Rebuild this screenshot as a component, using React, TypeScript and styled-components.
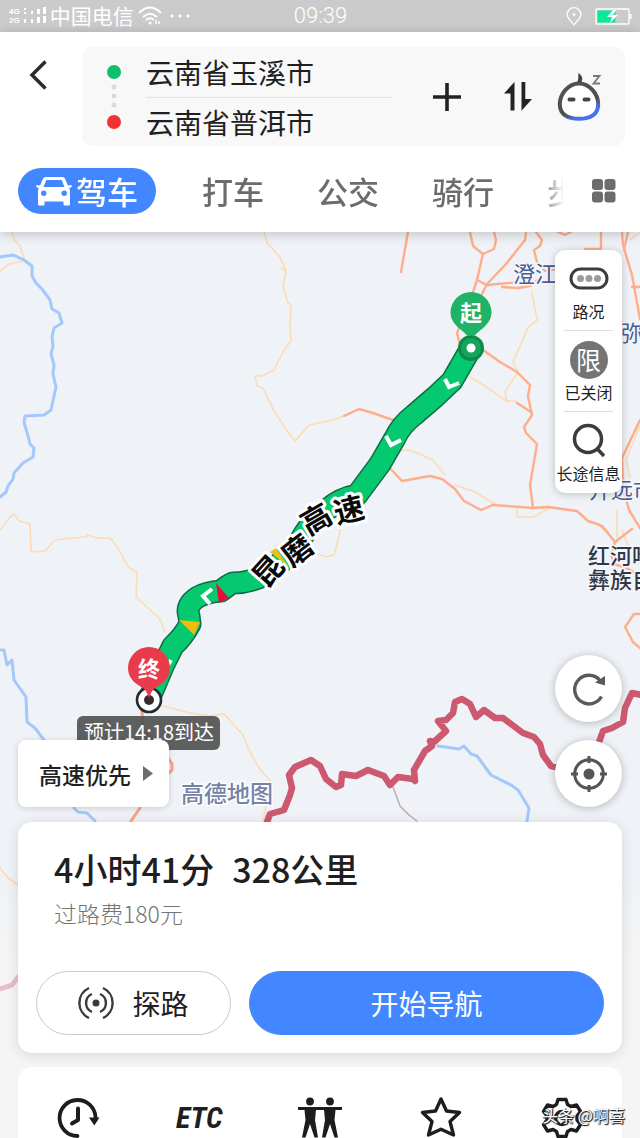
import React from 'react';
import styled, { createGlobalStyle } from 'styled-components';

const GlobalStyle = createGlobalStyle`
  * { box-sizing: border-box; }
  html, body { margin: 0; padding: 0; }
  body {
    background: #f5f5f5;
    color: #1f1f1f;
    font-family: "Noto Sans CJK SC", "Noto Sans", sans-serif;
  }
  button, input {
    margin: 0;
    padding: 0;
    border: 0;
    background: none;
    color: inherit;
    font: inherit;
  }
  button { cursor: pointer; }
  svg { display: block; flex: none; }
`;

const Screen = styled.div`
  height: 100vh;
  display: flex;
  flex-direction: column;
  overflow: hidden;
`;

/* ---------- status bar ---------- */

const StatusBar = styled.div`
  flex: none;
  height: 32px;
  padding: 0 8px 0 9px;
  display: grid;
  grid-template-columns: 1fr auto 1fr;
  align-items: center;
  background: #cbcbcb;
  color: #fff;
  font-size: 21px;
  line-height: 30px;
  font-weight: 300;
`;

const StatusGroup = styled.div<{ $end?: boolean; $gap: number }>`
  display: flex;
  align-items: center;
  justify-content: ${(p) => (p.$end ? 'flex-end' : 'flex-start')};
  gap: ${(p) => p.$gap}px;
`;

const NetworkType = styled.div`
  display: flex;
  flex-direction: column;
  font: 700 8px/9px "Liberation Sans", sans-serif;
`;

const CarrierName = styled.span`
  padding-bottom: 2px;
  font-weight: 400;
`;

const Clock = styled.time`
  font-family: Roboto, sans-serif;
  font-size: 22px;
`;

/* ---------- header ---------- */

const Header = styled.header`
  flex: none;
  position: relative;
  z-index: 1;
  padding: 15px 15px 18px 18px;
  background: #fff;
  box-shadow: 0 2px 12px rgba(0, 0, 0, 0.2);
`;

const RouteRow = styled.div`
  display: flex;
  align-items: flex-start;
  margin-bottom: 22px;
`;

const BackButton = styled.button`
  width: 64px;
  height: 56px;
  padding-left: 11px;
  display: flex;
  align-items: center;
`;

const RouteBox = styled.form`
  flex: 1;
  min-width: 0;
  height: 99px;
  padding: 0 22px 0 25px;
  display: flex;
  align-items: center;
  background: #f8f8f8;
  border-radius: 10px;
`;

const Fields = styled.div`
  flex: 1;
  min-width: 0;
  margin: 0 42px 0 25px;
`;

const Field = styled.input`
  display: block;
  width: 100%;
  height: 49px;
  outline: 0;
  font-size: 28px;
  line-height: 48px;
  & + & { border-top: 1px solid #e2e2e2; }
`;

const BoxActions = styled.div`
  display: flex;
  align-items: center;
`;

const IconButton = styled.button<{ $before?: number }>`
  display: block;
  margin-left: ${(p) => p.$before ?? 0}px;
`;

const TabRow = styled.div`
  display: flex;
  align-items: center;
  padding-right: 9px;
  gap: 28px;
`;

const Tabs = styled.nav`
  flex: 1;
  min-width: 0;
  display: flex;
  overflow: hidden;
  mask-image: linear-gradient(to right, #000 calc(100% - 24px), transparent);
`;

const Tab = styled.button<{ $active?: boolean }>`
  flex: none;
  height: 46px;
  padding: ${(p) => (p.$active ? '0 18px' : '0 27px 0 26px')};
  margin-right: ${(p) => (p.$active ? 20 : 0)}px;
  display: flex;
  align-items: center;
  gap: 4px;
  border-radius: 23px;
  background: ${(p) => (p.$active ? '#4287ff' : 'transparent')};
  color: ${(p) => (p.$active ? '#fff' : '#6c6c6c')};
  font-size: 31px;
  line-height: 46px;
  font-weight: 500;
`;

/* ---------- map ---------- */

const Body = styled.main`
  flex: 1;
  min-height: 0;
  position: relative;
  display: flex;
  flex-direction: column;
  background: linear-gradient(#eff2f6 640px, #f5f5f5 720px);
`;

const MapCanvas = styled.svg`
  position: absolute;
  top: 0;
  left: 0;
  width: 100%;
  height: auto;
`;

const Stage = styled.section`
  flex: 1;
  min-height: 0;
  position: relative;
  padding: 18px 18px 15px;
  display: flex;
  justify-content: space-between;
  align-items: flex-end;
`;

const Preference = styled.button`
  height: 67px;
  padding: 0 16px 0 21px;
  display: flex;
  align-items: center;
  gap: 11px;
  background: #fff;
  border-radius: 8px;
  box-shadow: 0 1px 6px rgba(0, 0, 0, 0.16);
  font-size: 23px;
  font-weight: 500;
`;

const Controls = styled.div`
  align-self: stretch;
  width: 67px;
  display: flex;
  flex-direction: column;
  gap: 18px;
`;

const LayerCard = styled.div`
  margin-bottom: auto;
  background: #fff;
  border-radius: 10px;
  box-shadow: 0 1px 8px rgba(0, 0, 0, 0.22);
`;

const LayerButton = styled.button`
  position: relative;
  width: 100%;
  height: 81px;
  padding: 10px 0;
  display: flex;
  flex-direction: column;
  align-items: center;
  gap: 3px;
  font-size: 16px;
  line-height: 20px;
  white-space: nowrap;
  &:not(:last-child)::after {
    content: "";
    position: absolute;
    left: 9px;
    right: 9px;
    bottom: 0;
    height: 1px;
    background: #dedede;
  }
`;

const LimitBadge = styled.span`
  width: 38px;
  height: 38px;
  border-radius: 50%;
  background: #747474;
  color: #fff;
  font-size: 25px;
  line-height: 36px;
`;

const RoundButton = styled.button`
  width: 67px;
  height: 67px;
  display: flex;
  align-items: center;
  justify-content: center;
  background: #fff;
  border-radius: 50%;
  box-shadow: 0 1px 8px rgba(0, 0, 0, 0.26);
`;

/* ---------- bottom panels ---------- */

const Summary = styled.section`
  flex: none;
  position: relative;
  margin: 0 18px 14px;
  padding: 27px 18px 18px;
  background: #fff;
  border-radius: 14px;
  box-shadow: 0 2px 14px rgba(0, 0, 0, 0.12);
`;

const Totals = styled.h1`
  margin: 0 18px 9px;
  display: flex;
  gap: 18px;
  font-size: 34px;
  line-height: 40px;
  font-weight: 500;
`;

const Toll = styled.p`
  margin: 0 18px 43px;
  color: #757575;
  font-size: 23px;
  line-height: 30px;
  font-weight: 300;
`;

const Actions = styled.div`
  display: flex;
  gap: 18px;
`;

const ActionButton = styled.button<{ $primary?: boolean }>`
  flex: ${(p) => (p.$primary ? '1 1 0' : '0 0 195px')};
  height: 64px;
  display: flex;
  align-items: center;
  justify-content: center;
  gap: 18px;
  border: 1px solid ${(p) => (p.$primary ? '#4287ff' : '#cacaca')};
  border-radius: 32px;
  background: ${(p) => (p.$primary ? '#4287ff' : '#fff')};
  color: ${(p) => (p.$primary ? '#fff' : '#1f1f1f')};
  font-size: 28px;
`;

const Toolbar = styled.nav`
  flex: none;
  position: relative;
  height: 71px;
  margin: 0 18px;
  padding-top: 29px;
  display: grid;
  grid-template-columns: repeat(5, 1fr);
  overflow: hidden;
  background: #fff;
  border-radius: 14px 14px 0 0;
`;

const ToolButton = styled.button`
  height: 44px;
  display: flex;
  align-items: center;
  justify-content: center;
`;

const EtcMark = styled.span`
  font: italic 700 30px/44px "Roboto Condensed", "Liberation Sans Narrow", "DejaVu Sans Condensed", sans-serif;
`;

const Watermark = styled.div`
  position: absolute;
  right: 15px;
  bottom: 11px;
  color: #fff;
  font-size: 16px;
  line-height: 24px;
  text-shadow: 1px 1px 1px #222, 0 1px 1px #444, 1px 0 1px #555;
`;

/* ---------- drawings ---------- */

const SignalBars = () => (
  <svg width="22" height="18" viewBox="0 0 22 18" fill="#fff">
    <path d="M0 1h2v2H0zM0 5h2v2H0zM0 12h2v4H0zM7 4h2v3H7zM7 12h2v4H7zM13 2h3v5h-3zM13 10h3v6h-3zM19 0h3v7h-3zM19 9h3v7h-3z" />
  </svg>
);

const WifiGlyph = () => (
  <svg width="24" height="20" viewBox="0 0 24 20" fill="none" stroke="#fff" strokeWidth="2">
    <path d="M1 7Q12-4 23 7M5 11q7-6.500 14 0M8 14q4-3.500 8 0" />
    <circle cx="12" cy="17" r="1.500" fill="#fff" stroke="none" />
    <path d="M18 14v4M21 15v3" strokeWidth="1.500" />
  </svg>
);

const MoreDots = () => (
  <svg width="26" height="4" viewBox="0 0 26 4" fill="#fff">
    <circle cx="6" cy="2" r="1.600" /><circle cx="14" cy="2" r="1.600" /><circle cx="22" cy="2" r="1.600" />
  </svg>
);

const PinGlyph = () => (
  <svg width="16" height="19" viewBox="0 0 16 19" fill="none" stroke="#fff" strokeWidth="1.300">
    <path d="M8 17.800C5.500 14.500 1.200 11.400 1.200 7.500a6.800 6.800 0 0 1 13.600 0c0 3.900-4.300 7-6.800 10.300z" />
    <circle cx="8" cy="7.500" r="1.700" fill="#fff" stroke="none" opacity="0.700" />
  </svg>
);

const Battery = () => (
  <svg width="37" height="17" viewBox="0 0 37 17">
    <rect x="1" y="1" width="33" height="15" rx="1" fill="none" stroke="#fff" strokeWidth="1.300" />
    <path d="M34.500 6h2v5h-2z" fill="#fff" />
    <path d="M2.500 2.500h18v12h-18z" fill="#06ec96" />
    <path d="M18 2l-6 7h5l-2 6 8-8h-5l3-5z" fill="#fff" />
  </svg>
);

const BackChevron = () => (
  <svg width="18" height="30" viewBox="0 0 18 30" fill="none" stroke="#2c2c2c" strokeWidth="3.500">
    <path d="M16.500 1.500L3 15l13.500 13.500" />
  </svg>
);

const RouteDots = () => (
  <svg width="14" height="66" viewBox="0 0 14 66">
    <circle cx="7" cy="8" r="7" fill="#0fc06b" />
    <g fill="#dadada"><circle cx="7" cy="23" r="2.500" /><circle cx="7" cy="32" r="2.500" /><circle cx="7" cy="41" r="2.500" /></g>
    <circle cx="7" cy="58" r="7" fill="#f23232" />
  </svg>
);

const PlusGlyph = () => (
  <svg width="28" height="28" viewBox="0 0 28 28" stroke="#222" strokeWidth="3.600">
    <path d="M14 0v28M0 14h28" />
  </svg>
);

const SwapGlyph = () => (
  <svg width="28" height="29" viewBox="0 0 28 29" fill="#222">
    <path d="M10.500 0v28.500H6.500V11.500H0z" />
    <path d="M17.500 0h3.800v17H28L17.500 28.800z" />
  </svg>
);

const Assistant = () => (
  <svg width="46" height="48" viewBox="0 0 46 48">
    <defs>
      <linearGradient id="face" x1="0.350" y1="0.450" x2="0.650" y2="1">
        <stop offset="0.450" stopColor="#505050" />
        <stop offset="0.800" stopColor="#4a70f0" />
      </linearGradient>
    </defs>
    <path d="M22 10.500c10.500 0 19 10 19.200 20.500 .1 10.500-8 14.800-19.200 14.800S2.700 41.500 2.800 31C3 20.500 11.500 10.500 22 10.500z" fill="#fff" stroke="url(#face)" strokeWidth="4" />
    <path d="M20 9c2-3 1-5 1.500-9 3 2 5 5 3 9z" fill="#444" />
    <path d="M12.500 26.500h4M27.500 26.500h4" stroke="#444" strokeWidth="4" strokeLinecap="round" />
    <path d="M36 3h6.500l-6 7.500H43" fill="none" stroke="#777" strokeWidth="1.800" />
  </svg>
);

const CarGlyph = () => (
  <svg width="36" height="30" viewBox="0 0 36 30">
    <path fill="#fff" fillRule="evenodd" d="M9.500 1h17c1.300 0 2 .7 2.500 1.800L32 9.500l3-.5c1 0 1 2 0 2.500l-2 .5c.8 1 1 2 1 3.500V28c0 1-.5 1.500-1.500 1.500H29c-1 0-1.500-.5-1.500-1.500v-2.500h-19V28c0 1-.5 1.500-1.500 1.500H3.500C2.500 29.500 2 29 2 28V15.500C2 14 2.200 13 3 12l-2-.5C0 11 0 9 1 9l3 .5 3-6.700C7.500 1.700 8.200 1 9.500 1zm.9 3L7.500 11h21l-2.900-7zM7.800 14.500a2.700 2.700 0 1 0 0 5.400 2.700 2.700 0 0 0 0-5.400zm20.400 0a2.700 2.700 0 1 0 0 5.400 2.700 2.700 0 0 0 0-5.400z" />
  </svg>
);

const GridGlyph = () => (
  <svg width="24" height="24" viewBox="0 0 24 24" fill="#6c6c6c">
    <rect width="11" height="11" rx="3" /><rect x="12.500" width="11" height="11" rx="3" />
    <rect y="12.500" width="11" height="11" rx="3" /><rect x="12.500" y="12.500" width="11" height="11" rx="3" />
  </svg>
);

const TrafficGlyph = () => (
  <svg width="40" height="38" viewBox="0 0 40 38">
    <rect x="2" y="9" width="36" height="19" rx="9.500" fill="none" stroke="#3c3c3c" strokeWidth="3" />
    <g fill="#9b9b9b"><circle cx="11.500" cy="18.500" r="3.500" /><circle cx="20" cy="18.500" r="3.500" /><circle cx="28.500" cy="18.500" r="3.500" /></g>
  </svg>
);

const SearchGlyph = () => (
  <svg width="38" height="38" viewBox="0 0 38 38" fill="none" stroke="#3c3c3c" strokeWidth="3.500">
    <circle cx="18" cy="17" r="13.500" />
    <path d="M26.500 26l7.500 8" />
  </svg>
);

const RefreshGlyph = () => (
  <svg width="36" height="36" viewBox="0 0 36 36">
    <path d="M30.500 25.500A14.300 14.300 0 1 1 29 9.500" fill="none" stroke="#5a5a5a" strokeWidth="3.400" />
    <path d="M34 5v9.500l-10-3z" fill="#5a5a5a" />
  </svg>
);

const LocateGlyph = () => (
  <svg width="38" height="38" viewBox="0 0 38 38" fill="none" stroke="#555">
    <circle cx="19" cy="19" r="14.300" strokeWidth="3" />
    <circle cx="19" cy="19" r="5.500" fill="#555" stroke="none" />
    <path d="M19 1v7M19 30v7M1 19h7M30 19h7" strokeWidth="3" />
  </svg>
);

const ProbeGlyph = () => (
  <svg width="36" height="34" viewBox="0 0 36 34" fill="none" stroke="#3a3a3a" strokeWidth="2.400">
    <circle cx="18" cy="17" r="3.500" fill="#3a3a3a" stroke="none" />
    <path d="M14 8a9.800 9.800 0 0 0 0 18M22 8a9.800 9.800 0 0 1 0 18M11 2a16.500 16.500 0 0 0 0 30M25 2a16.500 16.500 0 0 1 0 30" />
  </svg>
);

const HistoryGlyph = () => (
  <svg width="44" height="42" viewBox="0 0 44 42" fill="none" stroke="#1d1d1d">
    <path d="M21.500 39A18 18 0 1 1 39.500 20v3" strokeWidth="3.800" strokeLinecap="round" />
    <path d="M33 20.500h10.500l-5.200 8z" fill="#1d1d1d" stroke="none" />
    <path d="M22 11.500v11.500l-6 3.500" strokeWidth="4" strokeLinecap="round" strokeLinejoin="round" />
  </svg>
);

const PeopleGlyph = () => (
  <svg width="44" height="44" viewBox="0 0 44 44" fill="#1d1d1d">
    <circle cx="12" cy="5.500" r="3.900" /><circle cx="32" cy="5.500" r="3.900" />
    <path d="M0 11h44v3h-6.500L36.500 24l3.500 17.500h-3.500L32 28l-4.500 13.500H24L27 24l-1-10h-8L17 24l3 17.500h-3.500L12 28 7.500 41.500H4L7.500 24 6.500 14H0z" />
  </svg>
);

const StarGlyph = () => (
  <svg width="44" height="44" viewBox="0 0 44 44" fill="none" stroke="#1d1d1d" strokeWidth="3.400" strokeLinejoin="round">
    <path d="M22 3l5.500 12 13 1.500-9.500 9 3.500 13.500L22 33.300 9.500 39 13 25.500l-9.500-9 13-1.500z" />
  </svg>
);

const GearGlyph = () => (
  <svg width="44" height="44" viewBox="0 0 44 44" fill="none" stroke="#1d1d1d" strokeWidth="3.400" strokeLinejoin="round">
    <path d="M18 3.500h8l1.500 5 3.500 2 5.500-1.500 4 6.500-3.500 4.500v4l3.500 4.500-4 6.500L31 33.500l-3.500 2-1.500 5h-8l-1.500-5-3.500-2L7.500 35l-4-6.500L7 24v-4l-3.500-4.500 4-6.500L13 10.500l3.500-2z" />
    <circle cx="22" cy="22" r="6.500" />
  </svg>
);

const MAJOR_ROADS = [
  'M408 232L401 272', 'M470 232l3 14 10 8 11-5 2-9-2-8', 'M483 254l-6 26-6 18',
  'M477 280l10 5 33-3', 'M526 232l-1 8-19 24-19 20-10 20', 'M536 232l6 8-2 6-6 4 3 12 8 9 12-2',
  'M558 232l7 3 6-3', 'M585 249h16v-17', 'M502 287l16 1 12-2 10-8',
  'M344 416l15-7 14 4 20 7', 'M460 345l-3-12 4-10',
  'M483 350l17 12 17 10 13 13-2 11 4 19-8 12 2 6 11 11-7 41 3 23', 'M517 403l14 9',
  'M388 466l14 15 28-5 12 3 13 10 9 12 17 9 12-5 40 3 15-1 29 4 11 10 12 4 8 8',
  'M622 232l1 13 9 30 8 44', 'M624 250l4-18M632 287h8', 'M640 420l-18 38 1 30 6 22 11 18',
  'M602 526l13 16 17-13', 'M615 542l-4 12 3 10 12 4 14 7', 'M640 614h-6l-9 13 8 15 7 6',
];

const MINOR_ROADS = [
  'M12 232l2 8 6 6 5 15M0 271l9-7 15-3',
  'M264 232l3 11 13 14 6 14-3 15 5 17 3 2-1 23 1 13-7 9-10 20-12 6h-7l2 10 6 2 11 23 11 17 10 13 14-16 24-5 11-4',
  'M281 268l5 3', 'M0 530l10-13 4-3 5 7 11 3 1 28 14-1 10-11 30-3 3-2 8 3 14 0 8 10 10 19 9 5-1 25 24 22 5 13',
  'M163 706l27 7 20 3 14-2 19 21 6 15 10 18 12 14-8 39',
  'M532 292l5 28-9 8-15 34 5 10-13 20 2 10M470 377l10 6 27 18 9 0', 'M400 451l10-1 23 10 12 15M455 485l20 7 20 12M517 508v9h16l15-8',
  'M342 524l-8 31-8 2-11-4', 'M630 240l10-8M640 425l-14 35 4 18M617 510v28M622 530l6 16 12 4', 'M0 868l8 10 10 7',
];

const RIVERS = [
  'M0 257l13-2 11 5 8 6v10l4 7 6 6 8 11 2 9 7 4 3 10-8 5-2 9 1 9-2 8 3 11-1 9 3 13-5 23-7 5-19 1-1 6 4 14 2 8 4 4-1 9-10 6-9 10-1 6-5 7-2 6-6 5',
  'M0 650h4l3 15 5-5 2 20 12 17 1 25 8 6 12 16M74 808l4 4 9 1 8 8',
  'M438 746l21 3 5-3 7 8 6 2 14 19 20 10 7 5 11 18-2 13',
];

const BORDER =
  'M267 822l3-8 14-4 6-15 2-7-3-13 6-8 16-7 9 6 6 13 10 8 5-2 1-11 14 2 12-6 16 6 6 9 8-8 15 2 2 2-1-11 11-19 7-5-2-5 4 1 12-11-8-10 8-1 7-7 2-11 7-3 8 5 6 13 8-7 11 8h8l20 15 11 4 6 7 3 11 8 11 9 2M598 745l5-14 9-3 11-6 2-14 7-15 10 2';

const ROUTE =
  'M471 348L452 381 435 397 414 415Q401 425 395 438L380 464 357 495Q340 498 328 509 310 522 300 541 285 562 263 576 248 583 233 583 228 585 221 591 207 592 198 597 185 605 189 616L190 624Q183 637 173 646L164 664 150 697';

const CITY_CHARS = [
  { c: '昆', x: 268, y: 571, r: -48 },
  { c: '磨', x: 297, y: 550, r: -38 },
  { c: '高', x: 316, y: 519, r: -30 },
  { c: '速', x: 349, y: 510, r: -14 },
];

const RouteMap = () => (
  <MapCanvas viewBox="0 232 640 906" role="img" aria-label="昆磨高速路线图">
    <g fill="none" strokeLinejoin="round" strokeLinecap="round">
      <g stroke="#fbdcb4" strokeWidth="1.600">{MINOR_ROADS.map((d) => <path key={d} d={d} />)}</g>
      <g stroke="#ffad8a" strokeWidth="2.400">{MAJOR_ROADS.map((d) => <path key={d} d={d} />)}</g>
      <g stroke="#a3c8fb" strokeWidth="3">{RIVERS.map((d) => <path key={d} d={d} />)}</g>
      <path d="M142 711l1 17 9 12 16 18 4 6 0 6-3 3M140 808l-9 13" stroke="#fba383" strokeWidth="3" />
      <path d="M393 787l7 19 9 9 8 6" stroke="#c4aab0" strokeWidth="1.500" />
      <path d="M0 989l12-4 8-10" stroke="#e6bfca" strokeWidth="5" />
      <path d={BORDER} stroke="#cc596f" strokeWidth="6.500" />
      <path d={ROUTE} stroke="#0d6b48" strokeWidth="23" strokeLinecap="butt" />
      <path d={ROUTE} stroke="#05c96e" strokeWidth="20" strokeLinecap="butt" />
      <path d="M445 379l4 8 10-4M386 436l5 9 10-5M212 589l-9 7 7 8M171 660l-3 5" stroke="#fff" strokeWidth="4" strokeLinecap="butt" strokeLinejoin="miter" />
    </g>
    <path d="M216 583l3 20 10-5z" fill="#e60f3c" />
    <path d="M179 620l21 2-6 13z" fill="#f0bc0c" />
    <path d="M270 552l6-4 12 18z" fill="#f0c010" />

    <g fontSize="22" fill="#475c92" stroke="#f5f7fa" strokeWidth="3" paintOrder="stroke">
      <text x="513" y="282">澄江</text>
      <text x="621" y="341">弥</text>
      <text x="589" y="498">开远市</text>
      <g fill="#303849" fontWeight="500">
        <text x="588" y="564">红河哈</text>
        <text x="588" y="588">彝族自</text>
      </g>
      <text x="181" y="802" fontSize="23" fontWeight="500" fill="#7581a6" stroke="#fff">高德地图</text>
    </g>

    <g fontSize="30" fontWeight="700" textAnchor="middle" fill="#0a0a0a" stroke="#fff" strokeWidth="6" strokeLinejoin="round" paintOrder="stroke">
      {CITY_CHARS.map(({ c, x, y, r }) => (
        <text key={c} x={x} y={y + 11} transform={`rotate(${r} ${x} ${y})`}>{c}</text>
      ))}
    </g>

    <circle cx="471" cy="348" r="11.500" fill="#17a55b" stroke="#0c8a49" strokeWidth="3" />
    <circle cx="471" cy="348" r="4.500" fill="#fff" />
    <path d="M471 292a20.500 20.500 0 0 1 20.500 20.500c0 12-13 18-16.500 23h-8c-3.500-5-16.500-11-16.500-23A20.500 20.500 0 0 1 471 292z" fill="#20b265" />
    <text x="471" y="321" fontSize="22" fontWeight="700" fill="#fff" textAnchor="middle">起</text>

    <circle cx="149" cy="700" r="12" fill="#fff" stroke="#242a2f" strokeWidth="2.600" />
    <circle cx="149" cy="700" r="5" fill="#3a2a30" />
    <path d="M149 647a21 21 0 0 1 21 21c0 12-10 17-15 20-3 2-4.500 6-6 10-1.500-4-3-8-6-10-5-3-15-8-15-20a21 21 0 0 1 21-21z" fill="#ea3b4c" />
    <text x="149" y="677" fontSize="22" fontWeight="700" fill="#fff" textAnchor="middle">终</text>

    <rect x="77" y="716" width="143" height="34" rx="6" fill="#4a4a4a" opacity="0.880" />
    <text x="149" y="740" fontSize="20" fill="#fff" textAnchor="middle">预计14:18到达</text>
  </MapCanvas>
);

const TABS = ['打车', '公交', '骑行', '步行'];

export default function App() {
  return (
    <Screen>
      <GlobalStyle />
      <StatusBar>
        <StatusGroup $gap={4}>
          <NetworkType><span>4G</span><span>2G</span></NetworkType>
          <SignalBars />
          <CarrierName>中国电信</CarrierName>
          <WifiGlyph />
          <MoreDots />
        </StatusGroup>
        <Clock>09:39</Clock>
        <StatusGroup $end $gap={13}>
          <PinGlyph />
          <Battery />
        </StatusGroup>
      </StatusBar>

      <Header>
        <RouteRow>
          <BackButton type="button" aria-label="返回"><BackChevron /></BackButton>
          <RouteBox>
            <RouteDots />
            <Fields>
              <Field aria-label="起点" defaultValue="云南省玉溪市" />
              <Field aria-label="终点" defaultValue="云南省普洱市" />
            </Fields>
            <BoxActions>
              <IconButton type="button" aria-label="添加途经点"><PlusGlyph /></IconButton>
              <IconButton type="button" aria-label="交换起终点" $before={43}><SwapGlyph /></IconButton>
              <IconButton type="button" aria-label="语音助手" $before={25}><Assistant /></IconButton>
            </BoxActions>
          </RouteBox>
        </RouteRow>
        <TabRow>
          <Tabs aria-label="出行方式">
            <Tab type="button" $active><CarGlyph />驾车</Tab>
            {TABS.map((t) => <Tab type="button" key={t}>{t}</Tab>)}
          </Tabs>
          <IconButton type="button" aria-label="全部出行方式"><GridGlyph /></IconButton>
        </TabRow>
      </Header>

      <Body>
        <RouteMap />
        <Stage>
          <Preference type="button">
            高速优先
            <svg width="11" height="15" viewBox="0 0 11 15" fill="#6b6b6b"><path d="M1 0l10 7.500L1 15z" /></svg>
          </Preference>
          <Controls>
            <LayerCard>
              <LayerButton type="button"><TrafficGlyph />路况</LayerButton>
              <LayerButton type="button"><LimitBadge>限</LimitBadge>已关闭</LayerButton>
              <LayerButton type="button"><SearchGlyph />长途信息</LayerButton>
            </LayerCard>
            <RoundButton type="button" aria-label="刷新"><RefreshGlyph /></RoundButton>
            <RoundButton type="button" aria-label="定位"><LocateGlyph /></RoundButton>
          </Controls>
        </Stage>

        <Summary>
          <Totals><span>4小时41分</span><span>328公里</span></Totals>
          <Toll>过路费180元</Toll>
          <Actions>
            <ActionButton type="button"><ProbeGlyph />探路</ActionButton>
            <ActionButton type="button" $primary>开始导航</ActionButton>
          </Actions>
        </Summary>

        <Toolbar aria-label="工具">
          <ToolButton type="button" aria-label="出发时间"><HistoryGlyph /></ToolButton>
          <ToolButton type="button"><EtcMark>ETC</EtcMark></ToolButton>
          <ToolButton type="button" aria-label="组队"><PeopleGlyph /></ToolButton>
          <ToolButton type="button" aria-label="收藏"><StarGlyph /></ToolButton>
          <ToolButton type="button" aria-label="设置"><GearGlyph /></ToolButton>
        </Toolbar>
        <Watermark>头条 @啊喜</Watermark>
      </Body>
    </Screen>
  );
}
